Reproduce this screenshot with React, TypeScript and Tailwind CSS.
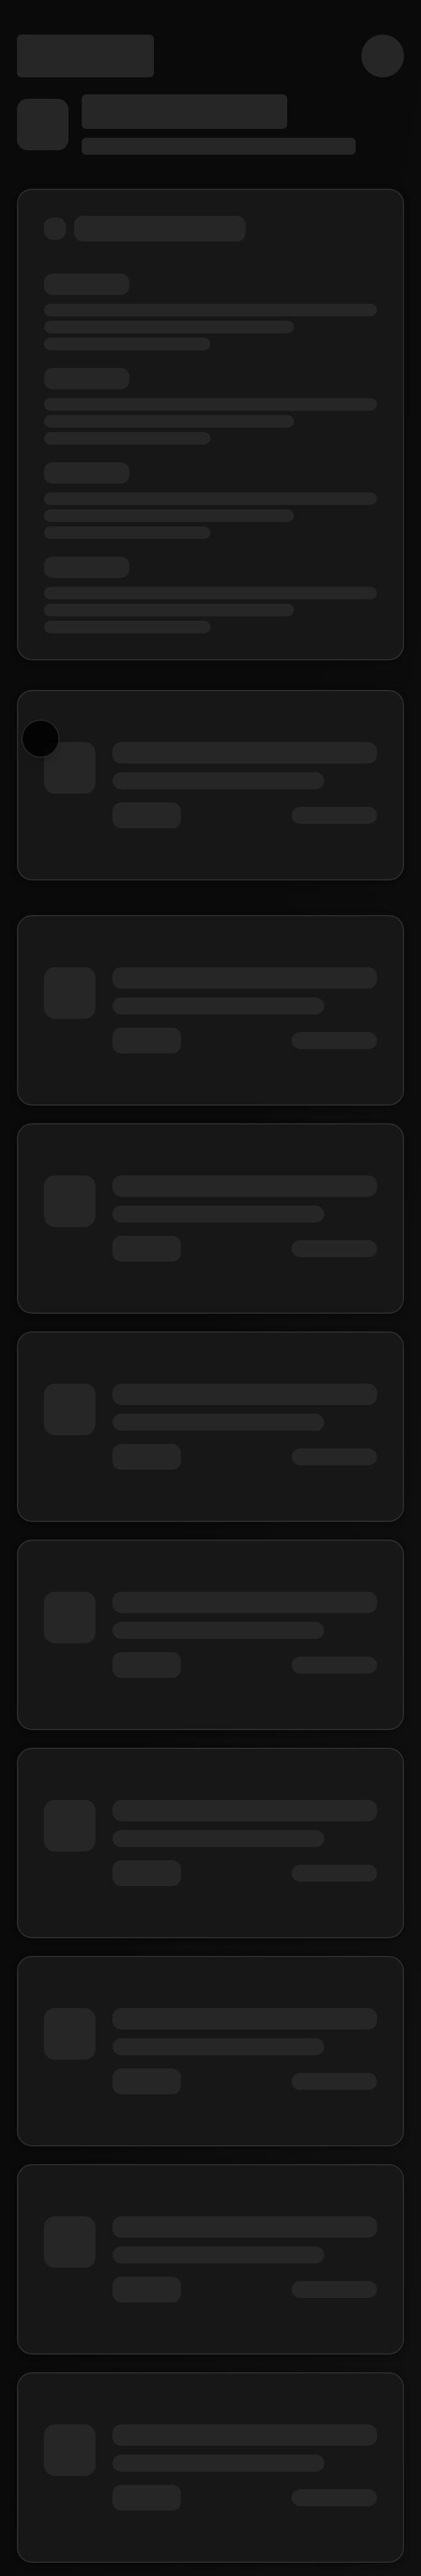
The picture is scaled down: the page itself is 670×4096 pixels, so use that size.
import React from "react";

function Bone({ className }: { className: string }) {
  return <div className={`bg-[#262626] ${className}`} />;
}

const panel =
  "relative rounded-[24px] border-2 border-[#2d2d2d] bg-[#171717] shadow-[0_2px_8px_rgba(0,0,0,0.4)]";

function SummarySection() {
  return (
    <div className="flex flex-col gap-[7px]">
      <Bone className="mb-[7px] h-[34px] w-[136px] rounded-[14px]" />
      <Bone className="h-5 w-full rounded-full" />
      <Bone className="h-5 w-3/4 rounded-full" />
      <Bone className="h-5 w-1/2 rounded-full" />
    </div>
  );
}

function SummaryCard() {
  return (
    <section className={`${panel} p-[41px]`}>
      <div className="flex items-center gap-[13px]">
        <Bone className="size-[35px] rounded-[14px]" />
        <Bone className="h-[41px] w-[273px] rounded-[14px]" />
      </div>
      <div className="mt-[51px] flex flex-col gap-7">
        {[0, 1, 2, 3].map((i) => (
          <SummarySection key={i} />
        ))}
      </div>
    </section>
  );
}

function ItemCard({ children }: { children?: React.ReactNode }) {
  return (
    <article className={`${panel} px-[41px] py-[81px]`}>
      <div className="flex items-start gap-[27px]">
        <Bone className="size-[82px] shrink-0 rounded-[17px]" />
        <div className="min-w-0 flex-1">
          <Bone className="h-[34px] w-full rounded-[14px]" />
          <Bone className="mt-[14px] h-[27px] w-4/5 rounded-full" />
          <div className="mt-[21px] flex items-center justify-between">
            <Bone className="h-[41px] w-[109px] rounded-[14px]" />
            <Bone className="h-[27px] w-[136px] rounded-full" />
          </div>
        </div>
      </div>
      {children}
    </article>
  );
}

export default function App() {
  return (
    <div className="min-h-screen bg-linear-to-br from-[#0a0a0a] via-[#0a0a0a] to-[#101010] px-[27px] pt-[55px] pb-[21px]">
      <header>
        <div className="flex items-center justify-between">
          <Bone className="h-[68px] w-[218px] rounded-[7px]" />
          <Bone className="size-[68px] rounded-full" />
        </div>
        <div className="mt-[27px] flex items-center gap-[21px]">
          <Bone className="size-[82px] shrink-0 rounded-[17px]" />
          <div className="flex flex-col gap-[14px]">
            <Bone className="h-[55px] w-[327px] rounded-[7px]" />
            <Bone className="h-[27px] w-[436px] rounded-[7px]" />
          </div>
        </div>
      </header>

      <main className="mt-[54px]">
        <SummaryCard />
        <div className="mt-[47px]">
          <ItemCard>
            <button
              type="button"
              aria-label="Menu"
              className="absolute top-[45px] left-[5px] size-[61px] rounded-full border-2 border-[#262626] bg-black/85 shadow-lg"
            />
          </ItemCard>
        </div>
        <div className="mt-[55px] flex flex-col gap-7">
          {[0, 1, 2, 3, 4, 5, 6, 7].map((i) => (
            <ItemCard key={i} />
          ))}
        </div>
      </main>
    </div>
  );
}
